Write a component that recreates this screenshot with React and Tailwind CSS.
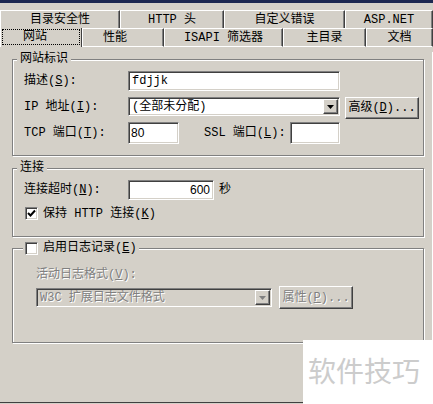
import React from "react";

const sunken =
  "border border-t-[#808080] border-l-[#808080] border-b-white border-r-white shadow-[inset_1px_1px_0_#404040,inset_-1px_-1px_0_#d4d0c8]";
const raised =
  "border border-t-white border-l-white border-b-[#404040] border-r-[#404040] shadow-[inset_-1px_-1px_0_#808080]";
const group =
  "ml-[12px] w-[412px] border border-[#808080] shadow-[inset_1px_1px_0_#fff,1px_1px_0_#fff]";
const dim = "text-[#808080] [text-shadow:1px_1px_0_#fff]";

function Tab({ children, className }) {
  return (
    <div
      className={`h-full flex items-center justify-center border-t border-t-white border-l border-l-white border-r border-r-[#404040] shadow-[inset_-1px_0_0_#808080] ${className}`}
    >
      {children}
    </div>
  );
}

function Arrow({ disabled }) {
  return (
    <div className={`w-[15px] h-full flex items-center justify-center bg-[#d4d0c8] ${raised}`}>
      <svg width="7" height="4" viewBox="0 0 7 4">
        <polygon points="0,0 7,0 3.5,4" fill={disabled ? "#808080" : "#000"} />
      </svg>
    </div>
  );
}

function Check({ checked }) {
  return (
    <div className={`w-[13px] h-[13px] bg-white flex items-center justify-center ${sunken}`}>
      {checked && (
        <svg width="9" height="9" viewBox="0 0 9 9">
          <polyline points="1,4 3.5,6.5 8,1.5" fill="none" stroke="#000" strokeWidth="2" />
        </svg>
      )}
    </div>
  );
}

export default function App() {
  return (
    <div className="relative w-[433px] h-[404px] overflow-hidden bg-[#d4d0c8] text-black text-[12px] leading-[14px] font-['Liberation_Mono','Noto_Sans_CJK_SC',monospace]">
      <div className="h-[3px] bg-[#1c2750]" />

      {/* tab rows */}
      <div className="mt-[7px] flex h-[18px]">
        <Tab className="w-[120px]">目录安全性</Tab>
        <Tab className="w-[104px]">HTTP 头</Tab>
        <Tab className="w-[121px]">自定义错误</Tab>
        <Tab className="w-[88px]">ASP.NET</Tab>
      </div>
      <div className="flex h-[19px]">
        <div className="w-[82px] h-full pt-[1px] pl-[1px] pr-[1px] border-l border-l-white border-r border-r-[#404040]">
          <div className="h-[16px] border border-dotted border-black flex items-center pl-[20px]">网站</div>
        </div>
        <Tab className="w-[82px] border-b border-b-white pr-[16px]">性能</Tab>
        <Tab className="w-[119px] border-b border-b-white">ISAPI 筛选器</Tab>
        <Tab className="w-[83px] border-b border-b-white">主目录</Tab>
        <Tab className="w-[67px] border-b border-b-white">文档</Tab>
      </div>

      {/* panel */}
      <div className="h-[351px] border-b border-b-[#404040] border-r border-r-white">
        <fieldset className={`${group} mt-[5px] pl-[11px] pt-[5px] pb-[11px]`}>
          <legend className="-ml-[7px] px-[3px] bg-[#d4d0c8]">网站标识</legend>
          <div className="flex items-center h-[20px]">
            <div className="w-[104px]">
              描述(<span className="underline">S</span>):
            </div>
            <div className={`w-[212px] h-[20px] bg-white px-[3px] flex items-center ${sunken}`}>fdjjk</div>
          </div>
          <div className="flex items-start mt-[6px]">
            <div className="w-[104px] h-[19px] flex items-center">
              IP 地址(<span className="underline">I</span>):
            </div>
            <div className={`w-[212px] h-[19px] bg-white flex items-center p-[1px] ${sunken}`}>
              <div className="flex-1 pl-[2px]">(全部未分配)</div>
              <Arrow />
            </div>
            <button className={`ml-[5px] w-[74px] h-[22px] bg-[#d4d0c8] ${raised}`}>
              高级(<span className="underline">D</span>)...
            </button>
          </div>
          <div className="flex items-center mt-[3px] h-[22px]">
            <div className="w-[104px]">
              TCP 端口(<span className="underline">T</span>):
            </div>
            <div className={`w-[51px] h-[22px] bg-white flex items-center px-[2px] font-['Liberation_Sans',sans-serif] ${sunken}`}>80</div>
            <div className="ml-[25px] w-[86px]">
              SSL 端口(<span className="underline">L</span>):
            </div>
            <div className={`w-[50px] h-[22px] bg-white ${sunken}`} />
          </div>
        </fieldset>

        <fieldset className={`${group} mt-[5px] pl-[11px] pt-[5px] pb-[16px]`}>
          <legend className="-ml-[7px] px-[3px] bg-[#d4d0c8]">连接</legend>
          <div className="flex items-center h-[20px]">
            <div className="w-[104px]">
              连接超时(<span className="underline">N</span>):
            </div>
            <div className={`w-[86px] h-[20px] bg-white flex items-center justify-end px-[3px] font-['Liberation_Sans',sans-serif] ${sunken}`}>600</div>
            <div className="ml-[5px]">秒</div>
          </div>
          <div className="flex items-center mt-[7px] h-[13px] pl-[1px]">
            <Check checked />
            <div className="ml-[5px]">
              保持 HTTP 连接(<span className="underline">K</span>)
            </div>
          </div>
        </fieldset>

        <fieldset className={`${group} mt-[4px] pl-[23px] pt-[13px] pb-[33px]`}>
          <legend className="-ml-[13px] px-[2px] bg-[#d4d0c8] flex items-center">
            <Check />
            <span className="ml-[5px]">
              启用日志记录(<span className="underline">E</span>)
            </span>
          </legend>
          <div className={dim}>
            活动日志格式(<span className="underline">V</span>):
          </div>
          <div className="flex items-start mt-[4px]">
            <div className={`w-[236px] h-[19px] mt-[2px] bg-[#d4d0c8] flex items-center p-[1px] ${sunken}`}>
              <div className={`flex-1 pl-[2px] ${dim}`}>W3C 扩展日志文件格式</div>
              <Arrow disabled />
            </div>
            <button className={`ml-[7px] w-[74px] h-[23px] bg-[#d4d0c8] ${raised} ${dim}`}>
              属性(<span className="underline">P</span>)...
            </button>
          </div>
        </fieldset>
      </div>

      {/* watermark */}
      <div className="absolute left-[303px] top-[340px] right-0 bottom-0 bg-white pl-[5px] pt-[14px]">
        <div className="text-[28px] leading-[32px] text-[#cccccc] font-['Noto_Sans_CJK_SC',sans-serif]">软件技巧</div>
      </div>
    </div>
  );
}
